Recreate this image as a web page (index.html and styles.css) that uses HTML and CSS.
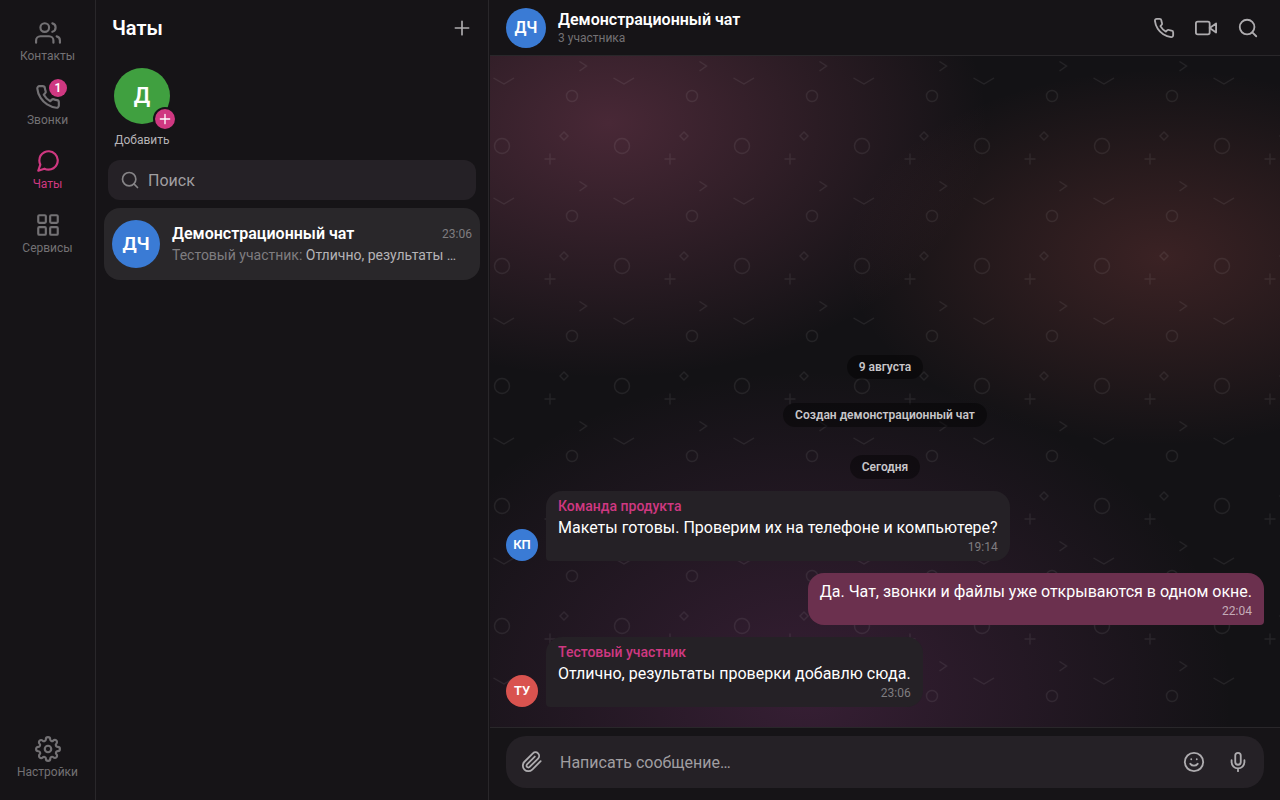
FILE: index.html
```html
<!DOCTYPE html>
<html lang="ru">
<head>
    <meta charset="UTF-8">
    <meta name="viewport" content="width=device-width, initial-scale=1.0">
    <title>Чаты</title>
    <link rel="stylesheet" href="styles.css">
</head>
<body>
    <div class="app">
        <nav class="rail">
            <a class="rail-item" href="#contacts">
                <svg class="icon rail-icon" viewBox="0 0 24 24"><path d="M17 21v-2a4 4 0 0 0-4-4H5a4 4 0 0 0-4 4v2"/><circle cx="9" cy="7" r="4"/><path d="M23 21v-2a4 4 0 0 0-3-3.87M16 3.13a4 4 0 0 1 0 7.75"/></svg>
                <span>Контакты</span>
            </a>
            <a class="rail-item" href="#calls">
                <svg class="icon rail-icon" viewBox="0 0 24 24"><path d="M22 16.92v3a2 2 0 0 1-2.18 2 19.79 19.79 0 0 1-8.63-3.07 19.5 19.5 0 0 1-6-6 19.79 19.79 0 0 1-3.07-8.67A2 2 0 0 1 4.11 2h3a2 2 0 0 1 2 1.72 12.84 12.84 0 0 0 .7 2.81 2 2 0 0 1-.45 2.11L8.09 9.91a16 16 0 0 0 6 6l1.27-1.27a2 2 0 0 1 2.11-.45 12.84 12.84 0 0 0 2.81.7A2 2 0 0 1 22 16.92z"/></svg>
                <span>Звонки</span>
                <span class="badge">1</span>
            </a>
            <a class="rail-item active" href="#chats">
                <svg class="icon rail-icon" viewBox="0 0 24 24"><path d="M21 11.5a8.38 8.38 0 0 1-.9 3.8 8.5 8.5 0 0 1-7.6 4.7 8.38 8.38 0 0 1-3.8-.9L3 21l1.9-5.7a8.38 8.38 0 0 1-.9-3.8 8.5 8.5 0 0 1 4.7-7.6 8.38 8.38 0 0 1 3.8-.9h.5a8.48 8.48 0 0 1 8 8v.5z"/></svg>
                <span>Чаты</span>
            </a>
            <a class="rail-item" href="#services">
                <svg class="icon rail-icon" viewBox="0 0 24 24"><rect x="3" y="3" width="7" height="7" rx="1"/><rect x="14" y="3" width="7" height="7" rx="1"/><rect x="14" y="14" width="7" height="7" rx="1"/><rect x="3" y="14" width="7" height="7" rx="1"/></svg>
                <span>Сервисы</span>
            </a>
            <a class="rail-item rail-bottom" href="#settings">
                <svg class="icon rail-icon" viewBox="0 0 24 24"><circle cx="12" cy="12" r="3"/><path d="M19.4 15a1.65 1.65 0 0 0 .33 1.82l.06.06a2 2 0 0 1 0 2.83 2 2 0 0 1-2.83 0l-.06-.06a1.65 1.65 0 0 0-1.82-.33 1.65 1.65 0 0 0-1 1.51V21a2 2 0 0 1-2 2 2 2 0 0 1-2-2v-.09A1.65 1.65 0 0 0 9 19.4a1.65 1.65 0 0 0-1.82.33l-.06.06a2 2 0 0 1-2.83 0 2 2 0 0 1 0-2.83l.06-.06a1.65 1.65 0 0 0 .33-1.82 1.65 1.65 0 0 0-1.51-1H3a2 2 0 0 1-2-2 2 2 0 0 1 2-2h.09A1.65 1.65 0 0 0 4.6 9a1.65 1.65 0 0 0-.33-1.82l-.06-.06a2 2 0 0 1 0-2.83 2 2 0 0 1 2.83 0l.06.06a1.65 1.65 0 0 0 1.82.33H9a1.65 1.65 0 0 0 1-1.51V3a2 2 0 0 1 2-2 2 2 0 0 1 2 2v.09a1.65 1.65 0 0 0 1 1.51 1.65 1.65 0 0 0 1.82-.33l.06-.06a2 2 0 0 1 2.83 0 2 2 0 0 1 0 2.83l-.06.06a1.65 1.65 0 0 0-.33 1.82V9a1.65 1.65 0 0 0 1.51 1H21a2 2 0 0 1 2 2 2 2 0 0 1-2 2h-.09a1.65 1.65 0 0 0-1.51 1z"/></svg>
                <span>Настройки</span>
            </a>
        </nav>

        <aside class="sidebar">
            <header class="sidebar-header">
                <h1>Чаты</h1>
                <button class="icon-button" type="button" aria-label="Новый чат">
                    <svg class="icon icon-md" viewBox="0 0 24 24"><path d="M4 12h16M12 4v16"/></svg>
                </button>
            </header>
            <div class="stories">
                <button class="story" type="button">
                    <span class="avatar avatar-xl green">Д
                        <span class="story-plus"><svg class="icon" viewBox="0 0 24 24"><path d="M5 12h14M12 5v14"/></svg></span>
                    </span>
                    <span>Добавить</span>
                </button>
            </div>
            <label class="search">
                <svg class="icon icon-md" viewBox="0 0 24 24"><circle cx="11" cy="11" r="8"/><path d="m21 21-4.3-4.3"/></svg>
                <input type="text" placeholder="Поиск" aria-label="Поиск">
            </label>
            <a class="chat-item" href="#demo">
                <span class="avatar avatar-lg blue">ДЧ</span>
                <span class="chat-info">
                    <span class="chat-row">
                        <span class="chat-name">Демонстрационный чат</span>
                        <span class="chat-time">23:06</span>
                    </span>
                    <span class="chat-preview"><span class="chat-author">Тестовый участник:</span> Отлично, результаты …</span>
                </span>
            </a>
        </aside>

        <main class="chat">
            <header class="chat-header">
                <span class="avatar avatar-md blue">ДЧ</span>
                <div class="chat-title">
                    <h2>Демонстрационный чат</h2>
                    <p>3 участника</p>
                </div>
                <div class="chat-actions">
                    <button class="icon-button" type="button" aria-label="Позвонить">
                        <svg class="icon" viewBox="0 0 24 24"><path d="M22 16.92v3a2 2 0 0 1-2.18 2 19.79 19.79 0 0 1-8.63-3.07 19.5 19.5 0 0 1-6-6 19.79 19.79 0 0 1-3.07-8.67A2 2 0 0 1 4.11 2h3a2 2 0 0 1 2 1.72 12.84 12.84 0 0 0 .7 2.81 2 2 0 0 1-.45 2.11L8.09 9.91a16 16 0 0 0 6 6l1.27-1.27a2 2 0 0 1 2.11-.45 12.84 12.84 0 0 0 2.81.7A2 2 0 0 1 22 16.92z"/></svg>
                    </button>
                    <button class="icon-button" type="button" aria-label="Видеозвонок">
                        <svg class="icon" viewBox="0 0 24 24"><path d="m23 7-7 5 7 5V7z"/><rect x="1" y="5" width="15" height="14" rx="2"/></svg>
                    </button>
                    <button class="icon-button" type="button" aria-label="Поиск по чату">
                        <svg class="icon" viewBox="0 0 24 24"><circle cx="11" cy="11" r="8"/><path d="m21 21-4.3-4.3"/></svg>
                    </button>
                </div>
            </header>

            <section class="messages">
                <div class="pill">9 августа</div>
                <div class="pill pill-event">Создан демонстрационный чат</div>
                <div class="pill">Сегодня</div>
                <div class="message">
                    <span class="avatar avatar-sm blue">КП</span>
                    <div class="bubble">
                        <div class="bubble-author">Команда продукта</div>
                        <p>Макеты готовы. Проверим их на телефоне и компьютере?</p>
                        <time>19:14</time>
                    </div>
                </div>
                <div class="message own">
                    <div class="bubble">
                        <p>Да. Чат, звонки и файлы уже открываются в одном окне.</p>
                        <time>22:04</time>
                    </div>
                </div>
                <div class="message">
                    <span class="avatar avatar-sm red">ТУ</span>
                    <div class="bubble">
                        <div class="bubble-author">Тестовый участник</div>
                        <p>Отлично, результаты проверки добавлю сюда.</p>
                        <time>23:06</time>
                    </div>
                </div>
            </section>

            <form class="composer">
                <div class="composer-box">
                    <button class="icon-button" type="button" aria-label="Прикрепить файл">
                        <svg class="icon" viewBox="0 0 24 24"><path d="m21.44 11.05-9.19 9.19a6 6 0 0 1-8.49-8.49l9.19-9.19a4 4 0 0 1 5.66 5.66l-9.2 9.19a2 2 0 0 1-2.83-2.83l8.49-8.48"/></svg>
                    </button>
                    <input type="text" placeholder="Написать сообщение…" aria-label="Сообщение">
                    <button class="icon-button" type="button" aria-label="Эмодзи">
                        <svg class="icon" viewBox="0 0 24 24"><circle cx="12" cy="12" r="10"/><path d="M8 14s1.5 2 4 2 4-2 4-2M9 9h.01M15 9h.01"/></svg>
                    </button>
                    <button class="icon-button" type="button" aria-label="Голосовое сообщение">
                        <svg class="icon" viewBox="0 0 24 24"><path d="M12 2a3 3 0 0 0-3 3v7a3 3 0 0 0 6 0V5a3 3 0 0 0-3-3Z"/><path d="M19 10v2a7 7 0 0 1-14 0v-2M12 19v3"/></svg>
                    </button>
                </div>
            </form>
        </main>
    </div>
</body>
</html>
```
FILE: styles.css
```css
* {
    box-sizing: border-box;
}

body {
    margin: 0;
    background-color: #161417;
    color: #fff;
    font-family: Roboto, "Noto Sans", sans-serif;
    font-size: 16px;
    line-height: 20px;
}

h1, h2, p {
    margin: 0;
}

a {
    color: inherit;
    text-decoration: none;
}

button {
    padding: 0;
    border: none;
    background: none;
    color: inherit;
    font: inherit;
    cursor: pointer;
}

input {
    flex: 1;
    min-width: 0;
    height: 20px;
    padding: 1px 0 0;
    border: none;
    outline: none;
    background: none;
    color: #fff;
    font: inherit;
    line-height: normal;
}

input::placeholder {
    color: #a09ea1;
    opacity: 1;
}

.app {
    display: flex;
    height: 100vh;
}

.icon {
    display: block;
    width: 22px;
    height: 22px;
    fill: none;
    stroke: currentColor;
    stroke-width: 2;
    stroke-linecap: round;
    stroke-linejoin: round;
}

.icon-md {
    width: 20px;
    height: 20px;
}

.icon-button {
    display: flex;
    align-items: center;
    justify-content: center;
    color: #aeacaf;
}

.avatar {
    position: relative;
    display: flex;
    align-items: center;
    justify-content: center;
    flex-shrink: 0;
    border-radius: 50%;
    color: #fff;
    font-weight: 600;
}

.avatar-sm {
    width: 32px;
    height: 32px;
    font-size: 13px;
}

.avatar-md {
    width: 40px;
    height: 40px;
    font-size: 16px;
}

.avatar-lg {
    width: 48px;
    height: 48px;
    font-size: 19px;
}

.avatar-xl {
    width: 56px;
    height: 56px;
    font-size: 22px;
}

.blue {
    background-color: #3a7bd5;
}

.green {
    background-color: #40a040;
}

.red {
    background-color: #d9534f;
}

/* left rail */

.rail {
    display: flex;
    flex-direction: column;
    width: 96px;
    padding: 12px 0;
    border-right: 1px solid #29272a;
    flex-shrink: 0;
}

.rail-item {
    position: relative;
    display: flex;
    flex-direction: column;
    align-items: center;
    height: 64px;
    padding-top: 8px;
    color: #737174;
    font-size: 12px;
    line-height: 16px;
}

.rail-icon {
    width: 26px;
    height: 26px;
    margin-bottom: 2px;
}

.rail-item.active {
    color: #cf3881;
}

.rail-bottom {
    height: 60px;
    margin-top: auto;
}

.badge {
    position: absolute;
    top: 3px;
    left: 49px;
    width: 18px;
    height: 18px;
    border-radius: 50%;
    background-color: #cf3881;
    color: #fff;
    font-weight: 600;
    line-height: 18px;
    text-align: center;
}

/* chat list */

.sidebar {
    width: 393px;
    margin-right: 1px;
    border-right: 1px solid #29272a;
    flex-shrink: 0;
}

.sidebar-header {
    display: flex;
    align-items: center;
    justify-content: space-between;
    height: 56px;
    padding: 0 16px;
}

.sidebar-header h1 {
    font-size: 20px;
    font-weight: 600;
}

.stories {
    padding: 12px 16px 0;
}

.story {
    display: flex;
    flex-direction: column;
    align-items: center;
    gap: 8px;
    width: 60px;
    color: #b5b3b6;
    font-size: 12px;
    line-height: 16px;
}

.story-plus {
    position: absolute;
    right: -7px;
    bottom: -7px;
    display: flex;
    align-items: center;
    justify-content: center;
    width: 24px;
    height: 24px;
    border: 2px solid #161417;
    border-radius: 50%;
    background-color: #cf3881;
}

.story-plus .icon {
    width: 16px;
    height: 16px;
}

.search {
    display: flex;
    align-items: center;
    gap: 8px;
    height: 40px;
    margin: 12px 12px 8px;
    padding: 0 12px;
    border-radius: 12px;
    background-color: #252126;
    color: #868487;
}

.chat-item {
    display: flex;
    align-items: center;
    gap: 12px;
    height: 72px;
    margin: 0 8px;
    padding: 0 8px;
    border-radius: 16px;
    background-color: #29272a;
}

.chat-info {
    flex: 1;
    min-width: 0;
}

.chat-row {
    display: flex;
    justify-content: space-between;
    align-items: center;
    line-height: 22px;
}

.chat-name {
    font-weight: 600;
}

.chat-time {
    color: #7f7d80;
    font-size: 12px;
}

.chat-preview {
    display: block;
    overflow: hidden;
    color: #b5b3b6;
    font-size: 14px;
    text-overflow: ellipsis;
    white-space: nowrap;
}

.chat-author {
    color: #7f7d80;
}

/* conversation */

.chat {
    display: flex;
    flex: 1;
    flex-direction: column;
    min-width: 0;
}

.chat-header {
    display: flex;
    align-items: center;
    gap: 12px;
    height: 56px;
    padding: 0 12px 0 16px;
    border-bottom: 1px solid #29272a;
    flex-shrink: 0;
}

.chat-title {
    flex: 1;
}

.chat-title h2 {
    font-size: 16px;
    font-weight: 600;
}

.chat-title p {
    color: #737174;
    font-size: 12px;
    line-height: 16px;
}

.chat-actions {
    display: flex;
    gap: 2px;
}

.chat-actions .icon-button {
    width: 40px;
    height: 40px;
}

.messages {
    display: flex;
    flex: 1;
    flex-direction: column;
    justify-content: flex-end;
    gap: 12px;
    min-height: 0;
    padding: 20px 16px;
    overflow: hidden;
    background-color: #131215;
    background-image:
        url("data:image/svg+xml,%3Csvg xmlns='http://www.w3.org/2000/svg' width='120' height='120' fill='none' stroke='%23fff' stroke-opacity='.07' stroke-width='1.4'%3E%3Ccircle cx='12' cy='90' r='7.5'/%3E%3Ccircle cx='82' cy='40' r='5.5'/%3E%3Cpath d='M3.500 22 14 28l10-6M89.500 5.500l7 4.500-7 5M54.500 103h11M60 97.500v11M74 76l4 4-4 4-4-4z'/%3E%3C/svg%3E"),
        radial-gradient(ellipse 48% 38% at 15% 10%, rgba(196, 91, 131, 0.3), transparent),
        radial-gradient(ellipse 40% 28% at 85% 30%, rgba(200, 91, 89, 0.22), transparent),
        radial-gradient(ellipse 54% 48% at 40% 95%, rgba(155, 66, 140, 0.26), transparent);
}

.pill {
    align-self: center;
    padding: 4px 12px;
    border-radius: 12px;
    background-color: rgba(0, 0, 0, 0.4);
    color: #c8c6c9;
    font-size: 12px;
    font-weight: 600;
    line-height: 16px;
}

.pill-event {
    margin: 12px 0 16px;
}

.message {
    display: flex;
    align-items: flex-end;
    gap: 8px;
}

.message.own {
    justify-content: flex-end;
}

.bubble {
    display: flex;
    flex-direction: column;
    max-width: 80%;
    padding: 6px 12px;
    border-radius: 16px 16px 16px 4px;
    background-color: #252126;
}

.bubble p {
    line-height: 22px;
}

.own .bubble {
    padding-top: 8px;
    border-radius: 16px 16px 4px 16px;
    background-color: #6b304e;
}

.bubble-author {
    margin-bottom: 2px;
    color: #cf3881;
    font-size: 14px;
    font-weight: 500;
    line-height: 18px;
}

.bubble time {
    align-self: flex-end;
    color: #7f7d80;
    font-size: 12px;
    line-height: 16px;
}

.own .bubble time {
    color: #c4acb8;
}

.composer {
    padding: 8px 16px 12px;
    border-top: 1px solid #29272a;
    flex-shrink: 0;
}

.composer-box {
    display: flex;
    align-items: center;
    height: 52px;
    padding: 0 4px;
    border-radius: 20px;
    background-color: #252126;
}

.composer-box input {
    margin: 0 6px;
}

.composer-box .icon-button {
    width: 44px;
    height: 44px;
}
```
